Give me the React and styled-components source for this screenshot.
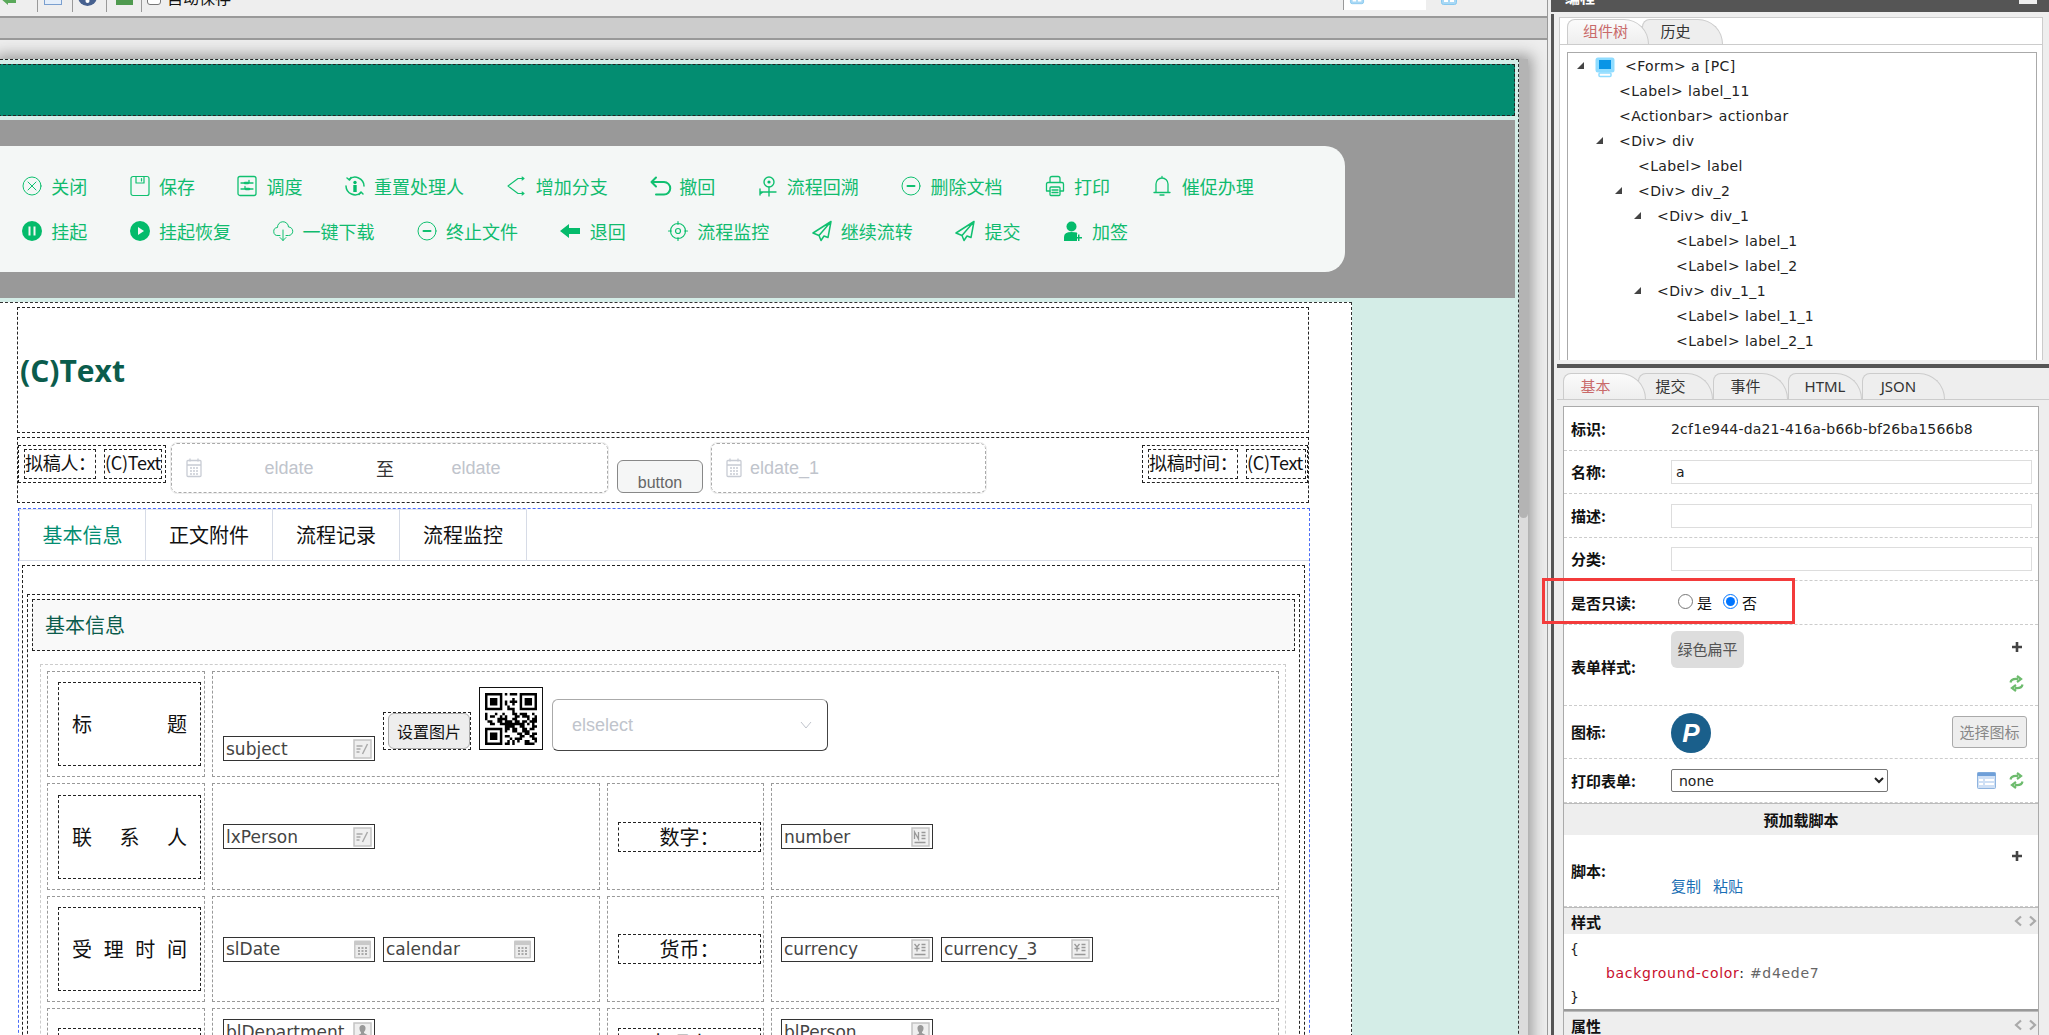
import React from 'react';
import styled, { createGlobalStyle } from 'styled-components';

const cjk = '"Noto Sans CJK SC", sans-serif';
const ui = '"DejaVu Sans", "Noto Sans CJK SC", sans-serif';

const Global = createGlobalStyle`
  html, body { margin: 0; padding: 0; height: 1035px; overflow: hidden; background: #eee; }
  * { box-sizing: border-box; }
  #root { height: 1035px; }
`;

const Page = styled.div`
  display: flex; width: 2049px; height: 1035px; overflow: hidden; background: #eee; font-family: ${ui}; position: relative;
`;
const Designer = styled.div`
  width: 1548px; flex: none; display: flex; flex-direction: column; border-right: 1px solid #999; overflow: hidden;
`;
const TopBar = styled.div`
  height: 18px; flex: none; border-bottom: 2px solid #999; background: #eee; display: flex; align-items: flex-start; overflow: hidden;
`;
const TopLeft = styled.div`
  display: flex; align-items: flex-start; width: 1343px; flex: none; height: 12px;
`;
const TopTool = styled.div`
  width: ${p => p.$w}px; flex: none; height: 12px; display: flex; justify-content: flex-start; align-items: flex-end; border-right: 1px solid #999; padding: 0 0 ${p => p.$pb || 7}px ${p => p.$pl || 0}px; overflow: hidden;
`;
const AutoSave = styled.label`
  display: flex; align-items: center; gap: 6px; font: 16px ${cjk}; color: #111; margin: -14px 0 0 5px; line-height: 22px; height: 22px;
`;
const FakeCheck = styled.span`
  width: 14px; height: 14px; border: 1px solid #777; border-radius: 3px; background: #fff; flex: none; margin-top: 2px;
`;
const ModeBox = styled.div`
  width: ${p => p.$w}px; height: 10px; flex: none; background: ${p => p.$on ? '#fff' : 'transparent'}; border-left: ${p => p.$on ? '1px solid #999' : 'none'}; display: flex; align-items: flex-end; padding: 0 0 5px ${p => p.$pl}px; gap: 6px; overflow: hidden;
`;
const ModeText = styled.span`
  font: 15px/16px "DejaVu Sans", sans-serif; color: #111; margin: -12px 0 -1px 0; height: 16px; transform: translateY(-4px);
`;
const SubBar = styled.div`
  height: 22px; flex: none; background: #ccc; border-bottom: 2px solid #999;
`;
const Canvas = styled.div`
  flex: 1; min-height: 0; padding-top: 19px; overflow: hidden; background: #eee;
`;
const FormShell = styled.div`
  display: flex; width: 1528px; height: 1100px; box-shadow: 0 0 14px 4px #999;
`;
const FormBody = styled.div`
  width: 1519px; flex: none; background: #d4ede7; border-top: 1px dashed #222; border-right: 1px dashed #333; padding: 4px 3px 0 0; overflow: hidden;
`;
const ScrollTrack = styled.div`
  width: 9px; flex: none; background: #dcdcdc; height: 100%;
`;
const ScrollThumb = styled.div`
  height: 459px; background: #b4b4b4; border-radius: 0 0 5px 5px;
`;
const TealBar = styled.div`
  height: 52px; background: #038d71; border: 1px dashed #222; margin-left: -2px;
`;
const Strip = styled.div`height: 4px;`;
const GrayHeader = styled.div`
  height: 178px; background: #999; padding-top: 26px; overflow: hidden;
`;
const ActionPanel = styled.div`
  width: 1365px; height: 126px; margin-left: -20px; padding: 17px 0 0 42px; background: #f4f7f6; border-radius: 20px;
`;
const ActionRow = styled.div`
  display: flex; height: 45px; align-items: center; gap: 42.3px;
`;
const Action = styled.div`
  display: flex; align-items: center; gap: 9.3px; color: #10bb6e; font: 400 18px/24px ${cjk}; white-space: nowrap;
`;
const Sv = styled.svg`
  display: block; flex: none; overflow: visible;
`;
const Main = styled.div`
  width: 1352px; height: 760px; background: #fff; border: 1px dashed #333; border-left: none; border-bottom: none; margin-top: 4px; padding-top: 4px;
`;
const TitleBox = styled.div`
  margin-left: 17px; width: 1292px; height: 126px; border: 1px dashed #222; display: flex; align-items: center; padding: 2px 0 0 2px; font: 700 30px/40px "Open Sans", sans-serif; color: #0b5c4c;
`;
const InfoRow = styled.div`
  margin: 4px 0 0 17px; width: 1292px; height: 66px; border: 1px dashed #222; display: flex; align-items: flex-start;
`;
const LabelGroup = styled.div`
  display: flex; gap: 8px; margin: 7px 0 0 ${p => p.$ml || 0}; height: 38px; padding: 3px 0 0 5px; border: 1px dashed #222; flex: none; width: ${p => p.$w}px;
`;
const SmallLabel = styled.div`
  width: ${p => p.$w}px; height: 30px; border: 1px dashed #222; font: 400 18px/25px ${cjk}; color: #111; white-space: nowrap; overflow: hidden; letter-spacing: -0.3px;
`;
const DateBox = styled.div`
  width: ${p => p.$w}px; height: 50px; margin: 5px 0 0 ${p => p.$ml}px; border: 1px dashed #aaa; border-radius: 6px; outline: 1px solid #eee; display: flex; align-items: center; padding-left: 14px; flex: none; font: 18px "Liberation Sans", sans-serif; color: #c0c4cc;
`;
const DateText = styled.span`
  margin-left: ${p => p.$ml}px; width: ${p => p.$w}px; text-align: center; flex: none;
`;
const DateTo = styled.span`
  width: 32px; margin-left: ${p => p.$ml}px; text-align: center; color: #333; font: 400 18px ${cjk}; flex: none;
`;
const PlainButton = styled.div`
  width: 86px; height: 33px; margin: 22px 0 0 9px; flex: none; background: #f5f6f6; border: 1px solid #888; border-radius: 6px; text-align: center; font: 16px/44px "Liberation Sans", sans-serif; color: #666; overflow: hidden;
`;
const TabsBox = styled.div`
  margin: 5px 0 0 18px; width: 1292px; border: 1px dashed #4a6cf7; border-bottom: none; height: 560px;
`;
const TabStrip = styled.div`
  display: flex; height: 52px; border-bottom: 1px solid #d6dbe6;
`;
const MainTab = styled.div`
  width: 127px; height: 52px; border-right: 1px solid #d6dbe6; border-top: 1px solid #e4e7ed; border-left: ${p => p.$first ? '1px solid #d6dbe6' : 'none'}; text-align: center; font: 400 20px/50px ${cjk}; color: ${p => p.$on ? '#038d71' : '#111'};
`;
const TabPane = styled.div`
  margin: 4px 4px 0 3px; border: 1px dashed #222; border-bottom: none; padding-top: 28px; height: 520px;
`;
const InnerPane = styled.div`
  margin: 0 4px; border: 1px dashed #222; border-bottom: none; padding: 4px 4px 0; height: 480px;
`;
const SectionHead = styled.div`
  height: 52px; border: 1px dashed #222; background: #f9f9f9; padding-left: 12px; font: 400 20px/50px ${cjk}; color: #0b5c4c;
`;
const FormTable = styled.div`
  margin: 13px 9px 0 8px; border: 1px dashed #ccc; border-bottom: none; padding: 6px 0 0 6px; display: flex; flex-direction: column; gap: 6px;
`;
const TableRow = styled.div`
  display: grid; grid-template-columns: 158px 388px 157px 508px; column-gap: 7px; height: ${p => p.$h}px; align-items: stretch;
`;
const Cell = styled.div`
  border: 1px dashed #999; display: flex; align-items: ${p => p.$align || 'center'}; padding-left: ${p => p.$pl || 10}px; grid-column: ${p => p.$span ? 'span 3' : 'auto'}; gap: 8px; position: relative; min-width: 0; padding-top: ${p => p.$pt || 0}px; overflow: hidden;
`;
const FieldName = styled.div`
  width: 143px; height: 84px; flex: none; border: 1px dashed #222; display: flex; align-items: center; justify-content: space-between; padding: 0 13px; font: 400 20px/26px ${cjk}; color: #111; margin-top: ${p => p.$mt || 0}px;
`;
const SideName = styled.div`
  width: 143px; height: 30px; border: 1px dashed #222; margin: ${p => p.$mt || 0}px 0 0 0; text-align: center; font: 400 20px/28px ${cjk}; color: #111; flex: none;
`;
const Input = styled.div`
  width: 152px; height: 25px; flex: none; border: 1px solid #333; background: #fff; display: flex; align-items: center; justify-content: space-between; padding: 0 2px 0 2px; font: 17px/24px "DejaVu Sans", sans-serif; color: #444; margin-top: ${p => p.$mt || 0}px; overflow: hidden;
`;
const SetImage = styled.div`
  width: 88px; height: 38px; flex: none; margin-top: 40px; border: 1px dashed #222; padding-left: 4px;
`;
const SetImageInner = styled.div`
  height: 36px; background: #eee; border: 1px solid #aaa; border-radius: 6px; text-align: center; font: 400 16px/34px ${cjk}; color: #111;
`;
const QrBox = styled.div`
  width: 64px; height: 63px; flex: none; margin: 15px 0 0 0; border: 1px solid #111; background: #fff; display: flex; align-items: center; justify-content: center;
`;
const ElSelect = styled.div`
  width: 276px; height: 52px; flex: none; margin: 27px 0 0 1px; border: 1px solid #aaa; border-right-color: #444; border-bottom-color: #444; border-radius: 6px; display: flex; align-items: center; justify-content: space-between; padding: 0 15px 0 19px; font: 18px "Liberation Sans", sans-serif; color: #c0c4cc;
`;

/* right column */
const Gutter = styled.div`width: 3px; flex: none; background: #eee;`;
const Side = styled.div`
  flex: 1; min-width: 0; display: flex; flex-direction: column; height: 1035px;
`;
const SideTitle = styled.div`
  height: 12px; flex: none; background: #555; color: #fff; font: 700 15px ${cjk}; display: flex; justify-content: space-between; align-items: flex-end; padding: 0 12px 9px 14px; line-height: 12px; overflow: hidden;
`;
const SideClose = styled.span`
  width: 18px; height: 10px; background: #eee; display: block; margin-bottom: -1px;
`;
const SideBody = styled.div`
  flex: 1; min-height: 0; margin-top: 2px; border-left: 3px solid #555; padding-left: 3px; display: flex; flex-direction: column; background: #eee;
`;
const UpperPane = styled.div`
  margin: 3px 6px 0 2px; height: 343px; border: 1px solid #ccc; border-bottom: none; background: #fff; display: flex; flex-direction: column; overflow: hidden;
`;
const PaneTabs = styled.div`
  display: flex; height: 27px; flex: none; padding-left: ${p => p.$pl}px; border-bottom: 1px solid #ccc; align-items: flex-end;
`;
const PaneTab = styled.div`
  width: ${p => p.$w}px; height: ${p => p.$h}px; flex: none; margin-left: ${p => p.$ml || 0}px; border: 1px solid #ccc; border-bottom: none; border-radius: 8px 26px 0 0; background: ${p => p.$on ? 'linear-gradient(#fbfbfb, #eee)' : '#eee'}; color: ${p => p.$on ? '#c96a6a' : '#333'}; position: relative; z-index: ${p => p.$on ? 2 : 1}; font: 400 15px/${p => p.$h - 2}px "Noto Sans", "Noto Sans CJK SC", sans-serif; text-align: center; padding-right: ${p => p.$pr || 0}px;
`;
const TreeBox = styled.div`
  margin: 7px 5px 0 7px; flex: 1; min-height: 0; border: 1px solid #aaa; border-bottom: none; padding-top: 1px; overflow: hidden;
`;
const TreeRow = styled.div`
  height: 25px; display: flex; align-items: center; padding-left: ${p => p.$indent}px; font: 14px/25px ${ui}; color: #222; white-space: pre; letter-spacing: 0.4px; position: relative;
`;
const TreeArrow = styled.svg`
  position: absolute; left: ${p => p.$x}px; top: 8px;
`;
const Splitter = styled.div`
  height: 4px; flex: none; margin-top: 4px; background: #555;
`;
const LowerTabs = styled.div`
  height: 32px; flex: none; padding: 6px 0 0 6px; border-bottom: 1px solid #ccc; display: flex; align-items: flex-end;
`;
const PropsBox = styled.div`
  margin: 6px 10px 0 6px; flex: 1; min-height: 0; border: 1px solid #aaa; border-bottom: none; background: #fff; position: relative; overflow: hidden;
`;
const PropRow = styled.div`
  height: ${p => p.$h}px; border-bottom: 1px dashed #ccc; display: flex; align-items: center; padding: 0 6px 0 7px; position: relative;
`;
const PropName = styled.div`
  width: 100px; flex: none; font: 700 15px/20px ${cjk}; color: #111; margin-top: ${p => p.$mt || 0}px;
`;
const PropValue = styled.div`
  font: 14px/20px ${ui}; color: #222; letter-spacing: 0.2px;
`;
const TextInput = styled.div`
  flex: 1; height: 24px; border: 1px solid #ddd; font: 14px/23px ${ui}; color: #222; padding-left: 4px;
`;
const RadioWrap = styled.label`
  display: flex; align-items: center; font: 15px/20px ${cjk}; color: #111; margin-left: ${p => p.$ml}px; gap: 4px;
`;
const Radio = styled.input`
  width: 15px; height: 15px; margin: 0 0 3px 0;
`;
const Chip = styled.div`
  width: 73px; height: 37px; background: #ddd; border-radius: 6px; text-align: center; font: 400 15px/36px ${cjk}; color: #555; position: absolute; left: 107px; top: 6px;
`;
const IconAt = styled.div`
  position: absolute; right: ${p => p.$r}px; top: ${p => p.$t}px; line-height: 0;
`;
const PLogo = styled.div`
  width: 40px; height: 40px; border-radius: 50%; background: #1a5f8b; color: #fff; font: italic 700 26px/40px "Liberation Sans", sans-serif; text-align: center; margin-top: 2px;
`;
const ChooseBtn = styled.div`
  width: 75px; height: 32px; background: #eee; border: 1px solid #aaa; border-radius: 3px; text-align: center; font: 400 15px/30px ${cjk}; color: #888; margin-left: auto; margin-right: 5px;
`;
const NativeSelect = styled.select`
  width: 217px; height: 23px; font: 14px ${ui}; color: #222; background: #fff; border: 1px solid #777; border-radius: 2px; padding: 0 3px;
`;
const BandHead = styled.div`
  height: 32px; background: #eee; border-top: 1px solid #bbb; text-align: center; font: 700 15px/32px ${cjk}; color: #111;
`;
const ScriptRow = styled.div`
  height: 72px; position: relative; border-bottom: 1px dashed #ccc; padding-left: 7px;
`;
const ScriptName = styled(PropName)`
  padding-top: 26px;
`;
const Links = styled.div`
  position: absolute; left: 107px; top: 41px; display: flex; gap: 12px; font: 400 15px/20px ${cjk}; color: #1a6fb5;
`;
const SectionBand = styled.div`
  height: 27px; background: #eee; border-top: 1px solid #bbb; display: flex; align-items: center; justify-content: space-between; padding: 0 0 0 7px; font: 700 15px/23px ${cjk}; color: #111;
`;
const Code = styled.div`
  height: 77px; border-bottom: 2px solid #999; padding: 3px 0 0 6px; font: 14px/24px ${ui}; color: #222;
`;
const CodeLine = styled.div`
  padding-left: ${p => p.$pl || 0}px; letter-spacing: 0.7px;
`;
const CodeKey = styled.span`color: #c8102e;`;
const CodeVal = styled.span`color: #666;`;
const RedMark = styled.div`
  position: absolute; left: 1542px; top: 578px; width: 253px; height: 46px; border: 3px solid #f33b3b; pointer-events: none;
`;

/* icons */
const Ic = ({ children, w = 20, h = 20, fill = 'none', c = '#10c070', sw = 1.4, vb = '0 0 20 20' }) => (
  <Sv width={w} height={h} viewBox={vb} fill={fill} stroke={fill === 'none' ? c : 'none'} strokeWidth={sw} strokeLinecap="round" strokeLinejoin="round">{children}</Sv>
);
const G = '#04bb6b';
const icons = {
  close: <Ic sw={1}><circle cx="10" cy="10" r="9" /><path d="M6 6l8 8M14 6l-8 8" /></Ic>,
  save: <Ic sw={1.2}><rect x="1" y="0.5" width="18" height="19" rx="2" /><path d="M6 .5V7h8V.5M11.5 2.5v2.5" /></Ic>,
  swap: <Ic sw={1.3}><rect x="1" y="0.5" width="18" height="19" rx="2" /><path d="M4 7h12M12 4.5V7M16 13H4M8 10.5V13" /><path d="M8 7h3M9 13h3" strokeWidth="2.6" /></Ic>,
  reset: <Ic sw={1.5}><path d="M4 3.5A9 9 0 0 1 19 10M16 16.5A9 9 0 0 1 1 10" /><path d="M2 2l2.5 2L6 1.5M18 18l-2-2-2 2.5" /><circle cx="10" cy="6.5" r="1.7" fill={G} stroke="none" /><path d="M8.3 9h3.4v7H8.3z" fill={G} stroke="none" /></Ic>,
  branch: <Ic sw={1.1}><path d="M18 2.5h-6L2 10l10 7.5h6M16 1l2 1.5L16 4M16 16l2 1.5-2 1.5" /></Ic>,
  undo: <Ic sw={2}><path d="M6 1.5L1.5 6 6 10.5M2 6h12a4.8 4.8 0 0 1 0 12.5H6" /></Ic>,
  trace: <Ic sw={1.4}><circle cx="11" cy="6" r="5" /><circle cx="11" cy="6" r="1.6" fill={G} stroke="none" /><path d="M11 11v9M2 16h16M2 13v6M5 16l-3 2" /></Ic>,
  minus: <Ic sw={1}><circle cx="10" cy="10" r="9" /><path d="M6.5 10h7" strokeWidth="2" /></Ic>,
  print: <Ic sw={1.3}><path d="M5 6.5V2.5q0-2 2-2h6q2 0 2 2v4M5 15H1.5V8q0-1.5 1.5-1.5h14q1.5 0 1.5 1.5v7H15" /><rect x="5" y="11" width="10" height="8.5" rx="1" /><path d="M7 14h6M7 16.5h6" /></Ic>,
  bell: <Ic sw={1.3}><path d="M4 16V8a6 6 0 0 1 12 0v8M2 16.5h16M8 19h4M10 .5v1.5" /></Ic>,
  pause: <Ic fill={G}><circle cx="10" cy="10" r="10" /><rect x="6.5" y="5.5" width="2" height="9" fill="#f4f7f6" /><rect x="11.5" y="5.5" width="2" height="9" fill="#f4f7f6" /></Ic>,
  play: <Ic fill={G}><circle cx="10" cy="10" r="10" /><path d="M8 6l6 4-6 4z" fill="#f4f7f6" /></Ic>,
  cloud: <Ic sw={1}><path d="M7 14.5H5a4 4 0 0 1-.5-8A5.5 5.5 0 0 1 15.5 6a4.2 4.2 0 0 1 0 8.5H13M10 9v10.5M7 16.5l3 3 3-3" /></Ic>,
  back: <Ic fill={G}><path d="M0 10l9-7v4h11v6H9v4z" /></Ic>,
  monitor: <Ic sw={1.2}><circle cx="10" cy="10" r="7.5" /><circle cx="10" cy="10" r="2.5" /><path d="M10 .5v3M10 16.5v3M.5 10h3M16.5 10h3" /></Ic>,
  send: <Ic sw={1.5}><path d="M19 .5L1 12l6 2.5zM19 .5L7 14.5 9 19.5l3-4.5 4 1.5z" /></Ic>,
  adduser: <Ic fill={G}><circle cx="8.5" cy="5.5" r="5" /><path d="M1 20v-4q0-5 7.5-5T14 13v7z" /><path d="M15 13.5h1.5V16H19v1.5h-2.5V20H15v-2.5h-2.5V16H15z" /></Ic>,
};
const row1 = [['close', '关闭'], ['save', '保存'], ['swap', '调度'], ['reset', '重置处理人'], ['branch', '增加分支'], ['undo', '撤回'], ['trace', '流程回溯'], ['minus', '删除文档'], ['print', '打印'], ['bell', '催促办理']];
const row2 = [['pause', '挂起'], ['play', '挂起恢复'], ['cloud', '一键下载'], ['minus', '终止文件'], ['back', '退回'], ['monitor', '流程监控'], ['send', '继续流转'], ['send', '提交'], ['adduser', '加签']];

const FieldIcon = ({ kind }) => (
  <Sv width="19" height="20" viewBox="0 0 19 20" fill="none">
    {kind === 'date' ? (
      <>
        <rect x="1" y="1.5" width="17" height="18" rx="1" fill="#c9c9c9" />
        <rect x="2.5" y="6" width="14" height="12" fill="#ececec" />
        <path d="M5 8h2v2H5zM8.5 8h2v2h-2zM12 8h2v2h-2zM5 11h2v2H5zM8.5 11h2v2h-2zM12 11h2v2h-2zM5 14h2v2H5zM8.5 14h2v2h-2zM12 14h2v2h-2z" fill="#aaa" />
      </>
    ) : (
      <>
        <rect x="1" y="1" width="17" height="18" fill="#efefef" stroke="#c4c4c4" strokeWidth="1.5" />
        {kind === 'edit' && <path d="M3.5 7h6M3.5 10h4M3.5 13h3M14.5 5l-5 10" stroke="#aaa" strokeWidth="1.5" />}
        {kind === 'num' && <path d="M3.5 12V5l4 7V5M10.5 5.5h4M10.5 8.5h4M10.5 11.5h4M3.5 15.5h11" stroke="#999" strokeWidth="1.3" />}
        {kind === 'cur' && <path d="M3.5 5L6 8l2.5-3M6 8v4.5M3.5 9.5h5M10.5 5.5h4M10.5 8.5h4M10.5 11.5h4M3.5 15.5h11" stroke="#999" strokeWidth="1.3" />}
        {kind === 'person' && <path d="M9.5 3a3 3 0 0 1 3 3.5c0 2-1 3-1.5 3.5v1l3.5 2V17h-10v-3.5l3.5-2v-1C7.5 9.5 6.5 8.5 6.5 6.5A3 3 0 0 1 9.5 3z" fill="#999" />}
      </>
    )}
  </Sv>
);
const Field = ({ name, kind, mt }) => (
  <Input $mt={mt}><span>{name}</span><FieldIcon kind={kind} /></Input>
);

const CalIcon = () => (
  <Sv width="16" height="20" viewBox="0 0 16 20" fill="none" stroke="#c8ccd4" strokeWidth="1.3">
    <rect x="1" y="2.5" width="14" height="16" rx="1" />
    <path d="M1 7h14M4 .5v3M12 .5v3M4 10h2M7 10h2M10 10h2M4 13h2M7 13h2M10 13h2M4 16h2M7 16h2M10 16h2" />
  </Sv>
);

const Qr = () => {
  const n = 21, cells = [];
  let s = 7919;
  const finder = (x, y) => x >= 0 && y >= 0 && x < 7 && y < 7 && (x === 0 || y === 0 || x === 6 || y === 6 || (x > 1 && x < 5 && y > 1 && y < 5));
  const inZone = (x, y, a, b) => x >= a && x < a + 8 && y >= b && y < b + 8;
  for (let y = 0; y < n; y++) for (let x = 0; x < n; x++) {
    let on;
    if (inZone(x, y, 0, 0)) on = finder(x, y);
    else if (inZone(x, y, 13, 0)) on = finder(x - 14, y);
    else if (inZone(x, y, 0, 13)) on = finder(x, y - 14);
    else { s = (s * 1103515245 + 12345) & 0x7fffffff; on = ((s >> 16) & 3) < 2; }
    if (on) cells.push(`M${x} ${y}h1v1h-1z`);
  }
  return <Sv width="52" height="52" viewBox="0 0 21 21"><path d={cells.join('')} fill="#000" /></Sv>;
};

const Chevron = () => (
  <Sv width="12" height="8" viewBox="0 0 12 8" fill="none" stroke="#c0c4cc" strokeWidth="1"><path d="M1 1l5 6 5-6" /></Sv>
);
const Refresh = () => (
  <Sv width="15" height="17" viewBox="0 0 15 17" fill="none" stroke="#6dbb6d" strokeWidth="2.2">
    <path d="M1.5 7.5C2 4.5 5 3.5 9 4M8 1l4 3-4 3" />
    <path d="M13.5 9.5C13 12.5 10 13.5 6 13M7 10l-4 3 4 3" />
  </Sv>
);
const Plus = () => (
  <Sv width="10" height="10" viewBox="0 0 10 10"><path d="M5 0v10M0 5h10" stroke="#444" strokeWidth="2.6" /></Sv>
);
const CodeArrows = () => (
  <Sv width="24" height="12" viewBox="0 0 24 12" fill="none" stroke="#aaa" strokeWidth="2.2"><path d="M7 1.5L2 6l5 4.5M16 1.5L21 6l-5 4.5" /></Sv>
);
const Tri = ({ x }) => (
  <TreeArrow $x={x} width="8" height="8" viewBox="0 0 8 8"><path d="M0 7L7 0v7z" fill="#444" /></TreeArrow>
);
const Pc = () => (
  <Sv width="20" height="20" viewBox="0 0 20 20">
    <rect x="0.5" y="0.5" width="19" height="15" rx="2.5" fill="#8fdcff" />
    <rect x="4" y="3" width="12" height="9" fill="#0a95e6" />
    <rect x="4" y="16" width="12" height="3.5" rx="1" fill="none" stroke="#8fdcff" strokeWidth="1.5" />
  </Sv>
);
const TableIcon = () => (
  <Sv width="19" height="17" viewBox="0 0 19 17">
    <rect x="0.5" y="0.5" width="18" height="16" rx="1" fill="#cfe0f5" stroke="#8fb4df" />
    <rect x="0.5" y="0.5" width="18" height="3.5" fill="#6f9fd8" />
    <path d="M2 7h4v2H2zM2 11h4v2H2zM8 7h9v2H8zM8 11h9v2H8z" fill="#fff" />
  </Sv>
);
const ModeIcon = ({ w }) => (
  <Sv width={w} height="14" viewBox="0 0 16 14">
    <rect x="0.5" y="0.5" width="15" height="13" rx="2" fill="#a8d8f5" stroke="#86c8ef" />
    <rect x="3" y="8" width="4" height="3" fill="#fff" />
    <rect x="9" y="8" width="4" height="3" fill="#fff" />
  </Sv>
);

const RootInner = styled.span`
  display: inline-flex; align-items: center; gap: 10px; margin-left: -30px;
`;
const TreeRootLabel = ({ children }) => (
  <RootInner><Pc /><span>{children}</span></RootInner>
);

const treeData = [
  ['<Form> a [PC]', 57, null, true],
  ['<Label> label_11', 51],
  ['<Actionbar> actionbar', 51],
  ['<Div> div', 51, 28],
  ['<Label> label', 70],
  ['<Div> div_2', 70, 47],
  ['<Div> div_1', 89, 66],
  ['<Label> label_1', 108],
  ['<Label> label_2', 108],
  ['<Div> div_1_1', 89, 66],
  ['<Label> label_1_1', 108],
  ['<Label> label_2_1', 108],
  ['<Button> button', 108],
];

export default function App() {
  return (
    <Page>
      <Global />
      <Designer>
        <TopBar>
          <TopLeft>
            <TopTool $w={38}>
              <Sv width="26" height="16" viewBox="0 0 26 16"><path d="M0 9l8-7v4h8v8H8v2z" fill="#5aa95a" /><rect x="23" y="7" width="2" height="2" fill="#777" /></Sv>
            </TopTool>
            <TopTool $w={35} $pl={6}><Sv width="18" height="16"><rect x="0.5" y="0.5" width="17" height="15" fill="#e4eefa" stroke="#7a9fcf" /></Sv></TopTool>
            <TopTool $w={34} $pl={5} $pb={6}><Sv width="19" height="19"><circle cx="9.5" cy="9.5" r="9.5" fill="#46608f" /><circle cx="9.5" cy="14" r="2" fill="#fff" /></Sv></TopTool>
            <TopTool $w={35} $pl={9}><Sv width="17" height="16"><rect x="0" y="0" width="17" height="16" fill="#4f9a4f" /></Sv></TopTool>
            <AutoSave><FakeCheck />自动保存</AutoSave>
          </TopLeft>
          <ModeBox $on $w={83} $pl={6}><ModeIcon w={14} /><ModeText>PC</ModeText></ModeBox>
          <ModeBox $w={122} $pl={15}><ModeIcon w={16} /><ModeText>Mobile</ModeText></ModeBox>
        </TopBar>
        <SubBar />
        <Canvas>
          <FormShell>
            <FormBody>
              <TealBar />
              <Strip />
              <GrayHeader>
                <ActionPanel>
                  <ActionRow>{row1.map(([k, t]) => <Action key={t}>{icons[k]}{t}</Action>)}</ActionRow>
                  <ActionRow>{row2.map(([k, t]) => <Action key={t}>{icons[k]}{t}</Action>)}</ActionRow>
                </ActionPanel>
              </GrayHeader>
              <Main>
                <TitleBox>(C)Text</TitleBox>
                <InfoRow>
                  <LabelGroup $w={148}><SmallLabel $w={72}>拟稿人：</SmallLabel><SmallLabel $w={58}>(C)Text</SmallLabel></LabelGroup>
                  <DateBox $w={437} $ml={5}><CalIcon /><DateText $ml={42} $w={90}>eldate</DateText><DateTo $ml={35}>至</DateTo><DateText $ml={30} $w={90}>eldate</DateText></DateBox>
                  <PlainButton>button</PlainButton>
                  <DateBox $w={275} $ml={8}><CalIcon /><DateText $ml={8} $w={60}>eldate_1</DateText></DateBox>
                  <LabelGroup $w={166} $ml="auto"><SmallLabel $w={90}>拟稿时间：</SmallLabel><SmallLabel $w={60}>(C)Text</SmallLabel></LabelGroup>
                </InfoRow>
                <TabsBox>
                  <TabStrip>
                    <MainTab $first $on>基本信息</MainTab>
                    <MainTab>正文附件</MainTab>
                    <MainTab>流程记录</MainTab>
                    <MainTab>流程监控</MainTab>
                  </TabStrip>
                  <TabPane>
                    <InnerPane>
                      <SectionHead>基本信息</SectionHead>
                      <FormTable>
                        <TableRow $h={106}>
                          <Cell><FieldName><span>标</span><span>题</span></FieldName></Cell>
                          <Cell $span $align="flex-start">
                            <Field name="subject" kind="edit" mt={64} />
                            <SetImage><SetImageInner>设置图片</SetImageInner></SetImage>
                            <QrBox><Qr /></QrBox>
                            <ElSelect>elselect<Chevron /></ElSelect>
                          </Cell>
                        </TableRow>
                        <TableRow $h={107}>
                          <Cell><FieldName><span>联</span><span>系</span><span>人</span></FieldName></Cell>
                          <Cell><Field name="lxPerson" kind="edit" /></Cell>
                          <Cell><SideName>数字：</SideName></Cell>
                          <Cell $pl={9}><Field name="number" kind="num" /></Cell>
                        </TableRow>
                        <TableRow $h={106}>
                          <Cell><FieldName><span>受</span><span>理</span><span>时</span><span>间</span></FieldName></Cell>
                          <Cell><Field name="slDate" kind="date" /><Field name="calendar" kind="date" /></Cell>
                          <Cell><SideName>货币：</SideName></Cell>
                          <Cell $pl={9}><Field name="currency" kind="cur" /><Field name="currency_3" kind="cur" /></Cell>
                        </TableRow>
                        <TableRow $h={106}>
                          <Cell $align="flex-start"><FieldName $mt={19}><span>办</span><span>理</span><span>部</span><span>门</span></FieldName></Cell>
                          <Cell $align="flex-start" $pt={10}><Field name="blDepartment" kind="person" /></Cell>
                          <Cell $align="flex-start"><SideName $mt={19}>办理人：</SideName></Cell>
                          <Cell $align="flex-start" $pt={10} $pl={9}><Field name="blPerson" kind="person" /></Cell>
                        </TableRow>
                      </FormTable>
                    </InnerPane>
                  </TabPane>
                </TabsBox>
              </Main>
            </FormBody>
            <ScrollTrack><ScrollThumb /></ScrollTrack>
          </FormShell>
        </Canvas>
      </Designer>
      <Gutter />
      <Side>
        <SideTitle>编程<SideClose /></SideTitle>
        <SideBody>
          <UpperPane>
            <PaneTabs $pl={7}>
              <PaneTab $on $w={82} $h={25} $pr={5}>组件树</PaneTab>
              <PaneTab $w={81} $h={25} $ml={-7} $pr={14}>历史</PaneTab>
            </PaneTabs>
            <TreeBox>
              {treeData.map(([t, ind, arrow, root]) => (
                <TreeRow key={t} $indent={ind}>
                  {root && <Tri x={9} />}
                  {arrow && <Tri x={arrow} />}
                  {root ? <TreeRootLabel>{t}</TreeRootLabel> : t}
                </TreeRow>
              ))}
            </TreeBox>
          </UpperPane>
          <Splitter />
          <LowerTabs>
            <PaneTab $on $w={83} $h={26} $pr={18}>基本</PaneTab>
            <PaneTab $w={75} $h={26} $ml={-8} $pr={10}>提交</PaneTab>
            <PaneTab $w={75} $h={26} $pr={10}>事件</PaneTab>
            <PaneTab $w={74} $h={26}>HTML</PaneTab>
            <PaneTab $w={83} $h={26} $pr={10}>JSON</PaneTab>
          </LowerTabs>
          <PropsBox>
            <PropRow $h={44}><PropName>标识:</PropName><PropValue>2cf1e944-da21-416a-b66b-bf26ba1566b8</PropValue></PropRow>
            <PropRow $h={43}><PropName>名称:</PropName><TextInput>a</TextInput></PropRow>
            <PropRow $h={44}><PropName>描述:</PropName><TextInput /></PropRow>
            <PropRow $h={43}><PropName>分类:</PropName><TextInput /></PropRow>
            <PropRow $h={44}>
              <PropName>是否只读:</PropName>
              <RadioWrap $ml={7}><Radio type="radio" name="ro" readOnly />是</RadioWrap>
              <RadioWrap $ml={11}><Radio type="radio" name="ro" defaultChecked />否</RadioWrap>
            </PropRow>
            <PropRow $h={81}>
              <PropName $mt={4}>表单样式:</PropName>
              <Chip>绿色扁平</Chip>
              <IconAt $r={16} $t={17}><Plus /></IconAt>
              <IconAt $r={14} $t={50}><Refresh /></IconAt>
            </PropRow>
            <PropRow $h={53}>
              <PropName>图标:</PropName>
              <PLogo>P</PLogo>
              <ChooseBtn>选择图标</ChooseBtn>
            </PropRow>
            <PropRow $h={44}>
              <PropName>打印表单:</PropName>
              <NativeSelect defaultValue="none"><option>none</option></NativeSelect>
              <IconAt $r={42} $t={13}><TableIcon /></IconAt>
              <IconAt $r={14} $t={13}><Refresh /></IconAt>
            </PropRow>
            <BandHead>预加载脚本</BandHead>
            <ScriptRow>
              <ScriptName>脚本:</ScriptName>
              <IconAt $r={16} $t={16}><Plus /></IconAt>
              <Links><span>复制</span><span>粘贴</span></Links>
            </ScriptRow>
            <SectionBand>样式<CodeArrows /></SectionBand>
            <Code>
              <CodeLine>{'{'}</CodeLine>
              <CodeLine $pl={36}><CodeKey>background-color</CodeKey>: <CodeVal>#d4ede7</CodeVal></CodeLine>
              <CodeLine>{'}'}</CodeLine>
            </Code>
            <SectionBand>属性<CodeArrows /></SectionBand>
          </PropsBox>
        </SideBody>
      </Side>
      <RedMark />
    </Page>
  );
}
